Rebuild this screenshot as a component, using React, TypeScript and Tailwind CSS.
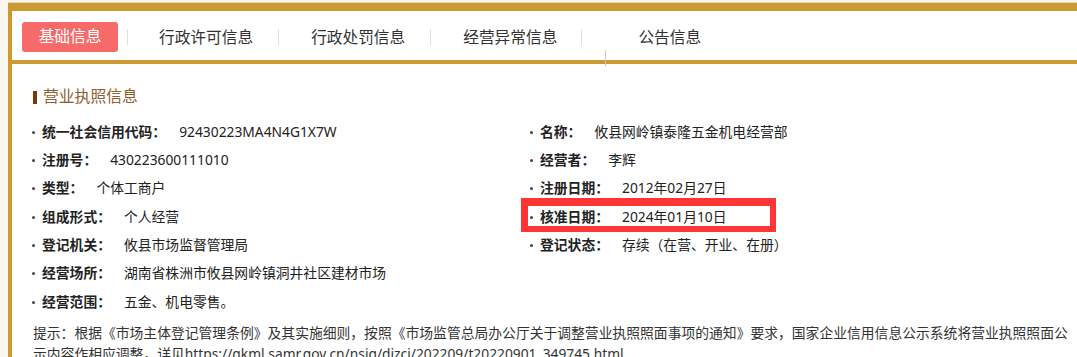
import React from 'react';

const leftRows: [string, string][] = [
  ['统一社会信用代码：', '92430223MA4N4G1X7W'],
  ['注册号：', '430223600111010'],
  ['类型：', '个体工商户'],
  ['组成形式：', '个人经营'],
  ['登记机关：', '攸县市场监督管理局'],
  ['经营场所：', '湖南省株洲市攸县网岭镇洞井社区建材市场'],
  ['经营范围：', '五金、机电零售。'],
];

const rightRows: [string, string][] = [
  ['名称：', '攸县网岭镇泰隆五金机电经营部'],
  ['经营者：', '李辉'],
  ['注册日期：', '2012年02月27日'],
  ['核准日期：', '2024年01月10日'],
  ['登记状态：', '存续（在营、开业、在册）'],
];

function Row({ label, value, marked }: { label: string; value: string; marked?: boolean }) {
  return (
    <div className="relative flex h-[28.33px] items-center">
      <span className="h-[3px] w-[3px] rounded-full bg-[#444]" />
      <span className="ml-[7px] font-bold text-[#222]">{label}</span>
      <span className="ml-[13px] text-[#222]">{value}</span>
      {marked && (
        <div className="pointer-events-none absolute left-[-9px] top-[-5px] h-[34px] w-[255px] border-b-[6px] border-l-[7px] border-r-[6px] border-t-[8px] border-[#ff3535]" />
      )}
    </div>
  );
}

export default function App() {
  return (
    <div
      className="h-screen overflow-hidden bg-[#f9f6ef] pl-[8px] pt-[3px]"
      style={{ fontFamily: '"Noto Sans", "Noto Sans CJK SC", sans-serif' }}
    >
      <div className="border-l-[4px] border-t-[8px] border-[#cb9a33] bg-white shadow-[0_-1px_0_#e9d9b0]">
        {/* tabs */}
        <div className="relative flex h-[53px] items-start border-b-[4px] border-[#cb9a33] pt-[11px] text-[15.7px] text-[#333]">
          <div className="ml-[10px] flex h-[30px] w-[96px] items-center justify-center rounded-[3px] bg-[#f76a6a] text-white">
            基础信息
          </div>
          <span className="ml-[9px] mt-[7px] h-[16px] w-px bg-[#e0e0e0]" />
          <span className="ml-[31px] leading-[30px]">行政许可信息</span>
          <span className="ml-[25px] mt-[7px] h-[16px] w-px bg-[#e0e0e0]" />
          <span className="ml-[32px] leading-[30px]">行政处罚信息</span>
          <span className="ml-[25px] mt-[7px] h-[16px] w-px bg-[#e0e0e0]" />
          <span className="ml-[32px] leading-[30px]">经营异常信息</span>
          <span className="ml-[24px] mt-[7px] h-[16px] w-px bg-[#e0e0e0]" />
          <span className="ml-[56px] leading-[30px]">公告信息</span>
          <span className="absolute left-[593px] top-[39px] h-[16px] w-px bg-[#c8c8c8]" />
        </div>

        {/* content */}
        <div className="pl-[20px] pr-[6px] pt-[23px] text-[13.8px]">
          <div className="flex h-[20px] items-center">
            <span className="ml-[1px] h-[13px] w-[4px] bg-[#7a3a08]" />
            <span className="ml-[6px] text-[15.8px] text-[#8f5e30]">营业执照信息</span>
          </div>

          <div className="mt-[11px] grid grid-cols-[498px_1fr]">
            <div className="flex flex-col">
              {leftRows.map(([l, v]) => (
                <Row key={l} label={l} value={v} />
              ))}
            </div>
            <div className="flex flex-col">
              {rightRows.map(([l, v]) => (
                <Row key={l} label={l} value={v} marked={l === '核准日期：'} />
              ))}
            </div>
          </div>

          <p className="ml-[1px] mt-[6px] break-all leading-[21px] text-[#333]">
            提示：根据《市场主体登记管理条例》及其实施细则，按照《市场监管总局办公厅关于调整营业执照照面事项的通知》要求，国家企业信用信息公示系统将营业执照照面公示内容作相应调整，详见https://gkml.samr.gov.cn/nsjg/djzcj/202209/t20220901_349745.html
          </p>
        </div>
      </div>
    </div>
  );
}
